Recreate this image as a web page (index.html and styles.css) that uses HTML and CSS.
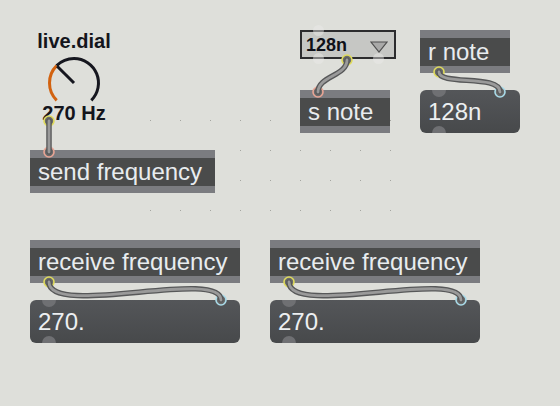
FILE: index.html
```html
<!DOCTYPE html>
<html>
<head>
<meta charset="utf-8">
<link rel="stylesheet" href="styles.css">
</head>
<body>
<div class="patcher">
  <svg class="grid" width="241" height="91" viewBox="0 0 241 91">
    <defs>
      <pattern id="dots" width="30" height="30" patternUnits="userSpaceOnUse">
        <rect x="0" y="0" width="1" height="1" fill="#a4a5a0"/>
      </pattern>
    </defs>
    <rect width="241" height="91" fill="url(#dots)"/>
  </svg>

  <div class="dial">
    <div class="dial-label">live.dial</div>
    <svg class="dial-knob" width="56" height="52" viewBox="0 0 56 52">
      <path d="M10.68,49.32 A24.5,24.5 0 0 1 10.68,14.68" fill="none" stroke="#d2620f" stroke-width="3"/>
      <path d="M10.68,14.68 A24.5,24.5 0 0 1 28,7.5 A24.5,24.5 0 0 1 45.32,49.32" fill="none" stroke="#16171f" stroke-width="3"/>
      <line x1="28" y1="32" x2="11.2" y2="15.2" stroke="#16171f" stroke-width="3"/>
    </svg>
    <div class="dial-value">270 Hz</div>
  </div>

  <div class="umenu">
    <span class="umenu-text">128n</span>
    <svg class="umenu-arrow" width="18" height="12" viewBox="0 0 18 12">
      <polygon points="1,1 17,1 9,11" fill="#a9a9a8" stroke="#4e4e4e" stroke-width="1.2"/>
    </svg>
    <span class="port port-top-l"></span>
    <span class="port port-bot-l"></span>
    <span class="port port-bot-r"></span>
  </div>

  <div class="obj obj-rnote"><div class="obj-body">r note</div></div>
  <div class="obj obj-snote"><div class="obj-body">s note</div></div>
  <div class="num num-note">128n</div>

  <div class="obj obj-send"><div class="obj-body">send frequency</div></div>

  <div class="obj obj-recv1"><div class="obj-body">receive frequency</div></div>
  <div class="num num-1">270.</div>

  <div class="obj obj-recv2"><div class="obj-body">receive frequency</div></div>
  <div class="num num-2">270.</div>

  <svg class="cords" width="560" height="406" viewBox="0 0 560 406">
    <g fill="#6b6b6b" stroke-width="1.6">
      <circle cx="49" cy="121" r="5" stroke="#e0dc5c"/>
      <circle cx="49" cy="152" r="5" stroke="#e9a595"/>
      <circle cx="347" cy="60" r="5" stroke="#e0dc5c"/>
      <circle cx="318" cy="92" r="5" stroke="#e9a595"/>
      <circle cx="439" cy="72" r="5" stroke="#e0dc5c"/>
      <circle cx="500" cy="92" r="5" stroke="#a9dbe9"/>
      <circle cx="49" cy="282" r="5" stroke="#e0dc5c"/>
      <circle cx="221" cy="300" r="5" stroke="#a9dbe9"/>
      <circle cx="289" cy="282" r="5" stroke="#e0dc5c"/>
      <circle cx="461" cy="300" r="5" stroke="#a9dbe9"/>
    </g>
    <g fill="none" stroke="#575859" stroke-width="5.5" stroke-linecap="round">
      <path d="M49,121 L49,152"/>
      <path d="M347,60 C347,76 318,76 318,92"/>
      <path d="M439,72 C439,86 500,74 500,92"/>
      <path d="M49,282 C49,318 221,268 221,300"/>
      <path d="M289,282 C289,318 461,268 461,300"/>
    </g>
    <g fill="none" stroke="#9a9a9a" stroke-width="2.8" stroke-linecap="round">
      <path d="M49,121 L49,152"/>
      <path d="M347,60 C347,76 318,76 318,92"/>
      <path d="M439,72 C439,86 500,74 500,92"/>
      <path d="M49,282 C49,318 221,268 221,300"/>
      <path d="M289,282 C289,318 461,268 461,300"/>
    </g>
  </svg>
</div>
</body>
</html>
```

FILE: styles.css
```css
html, body {
  margin: 0;
  padding: 0;
  background: #dedfda;
}

.patcher {
  position: relative;
  width: 560px;
  height: 406px;
  overflow: hidden;
  background: #dedfda;
  font-family: "Liberation Sans", Arial, sans-serif;
}

.grid {
  position: absolute;
  left: 150px;
  top: 120px;
}

/* live.dial */
.dial {
  position: absolute;
  left: 34px;
  top: 31px;
  width: 80px;
  display: flex;
  flex-direction: column;
  align-items: center;
  color: #14151c;
  font-weight: bold;
  font-size: 20px;
}

.dial-label,
.dial-value {
  height: 20px;
  line-height: 20px;
  white-space: nowrap;
}

.dial-knob {
  display: block;
}

/* umenu */
.umenu {
  position: absolute;
  left: 300px;
  top: 30px;
  width: 92px;
  height: 25px;
  border: 2px solid #2c2c2e;
  background: #c6c7c4;
  display: flex;
  align-items: flex-start;
  justify-content: space-between;
}

.umenu-text {
  padding-left: 4px;
  height: 25px;
  line-height: 27px;
  font-size: 18px;
  font-weight: bold;
  color: #0f1018;
}

.umenu-arrow {
  margin: 9px 6px 0 0;
}

.port {
  position: absolute;
  width: 11px;
  height: 11px;
  border-radius: 50%;
  background: rgba(235, 235, 232, 0.45);
}

.port-top-l { left: 11px; top: -7px; }
.port-bot-l { left: 11px; bottom: -7px; }
.port-bot-r { left: 71px; bottom: -7px; }

/* object boxes */
.obj {
  position: absolute;
  background: #7b7c80;
  padding: 8px 0 7px;
}

.obj-body {
  height: 28px;
  line-height: 28px;
  background: #4a4b4b;
  color: #e8ecef;
  font-size: 24px;
  padding-left: 8px;
  white-space: nowrap;
  overflow: hidden;
}

.obj-rnote { left: 420px; top: 30px; width: 90px; }
.obj-snote { left: 300px; top: 90px; width: 90px; }
.obj-send { left: 30px; top: 150px; width: 185px; }
.obj-recv1 { left: 30px; top: 240px; width: 210px; }
.obj-recv2 { left: 270px; top: 240px; width: 210px; }

/* number boxes */
.num {
  position: absolute;
  height: 43px;
  line-height: 43px;
  border-radius: 6px;
  background: linear-gradient(#545659, #47494b);
  color: #eceff1;
  font-size: 24px;
  padding-left: 8px;
  box-sizing: border-box;
  overflow: hidden;
  white-space: nowrap;
}

.num::before,
.num::after {
  content: "";
  position: absolute;
  left: 12px;
  width: 14px;
  height: 14px;
  border-radius: 50%;
  background: #6f7073;
}

.num::before { top: -7px; }
.num::after { bottom: -7px; }

.num-note { left: 420px; top: 90px; width: 100px; }
.num-1 { left: 30px; top: 300px; width: 210px; }
.num-2 { left: 270px; top: 300px; width: 210px; }

.cords {
  position: absolute;
  left: 0;
  top: 0;
  pointer-events: none;
}
```
